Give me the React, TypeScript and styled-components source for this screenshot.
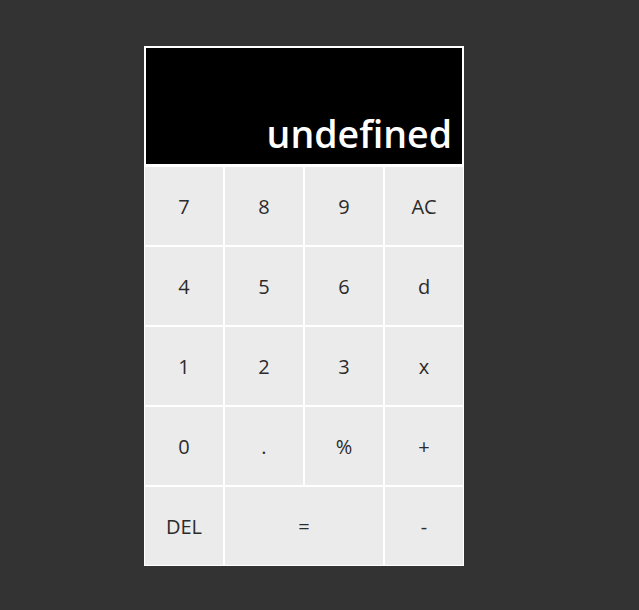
import React from "react";
import styled, { createGlobalStyle } from "styled-components";

const GlobalStyle = createGlobalStyle`
  html, body {
    margin: 0;
    padding: 0;
    background: #333333;
  }
  body {
    font-family: "Open Sans", "Noto Sans", sans-serif;
  }
`;

const Page = styled.div`
  padding: 46px 0 0 144px;
`;

const Calculator = styled.div`
  width: 320px;
  display: flex;
  flex-direction: column;
`;

const Display = styled.div`
  box-sizing: border-box;
  height: 120px;
  background: #000000;
  border: 2px solid #ffffff;
  color: #ffffff;
  display: flex;
  align-items: flex-end;
  justify-content: flex-end;
  padding: 0 10px 4px 0;
  font-size: 37.5px;
  font-weight: 600;
  line-height: 1.4;
  overflow: hidden;
`;

const Keys = styled.div`
  display: grid;
  grid-template-columns: repeat(4, 80px);
  grid-auto-rows: 80px;
`;

const Key = styled.button<{ $span?: number }>`
  box-sizing: border-box;
  grid-column: span ${(p) => p.$span ?? 1};
  margin: 0;
  padding: 1px 0 0;
  background: #ebebeb;
  border: 1px solid #ffffff;
  color: #2b2b2b;
  font-family: "Open Sans", "Noto Sans", sans-serif;
  font-size: 20px;
  font-weight: 500;
  cursor: pointer;
`;

const keys: { label: string; span?: number }[] = [
  { label: "7" }, { label: "8" }, { label: "9" }, { label: "AC" },
  { label: "4" }, { label: "5" }, { label: "6" }, { label: "d" },
  { label: "1" }, { label: "2" }, { label: "3" }, { label: "x" },
  { label: "0" }, { label: "." }, { label: "%" }, { label: "+" },
  { label: "DEL" }, { label: "=", span: 2 }, { label: "-" },
];

export default function App() {
  return (
    <>
      <GlobalStyle />
      <Page>
        <Calculator>
          <Display>undefined</Display>
          <Keys>
            {keys.map((k, i) => (
              <Key key={i} $span={k.span}>
                {k.label}
              </Key>
            ))}
          </Keys>
        </Calculator>
      </Page>
    </>
  );
}
